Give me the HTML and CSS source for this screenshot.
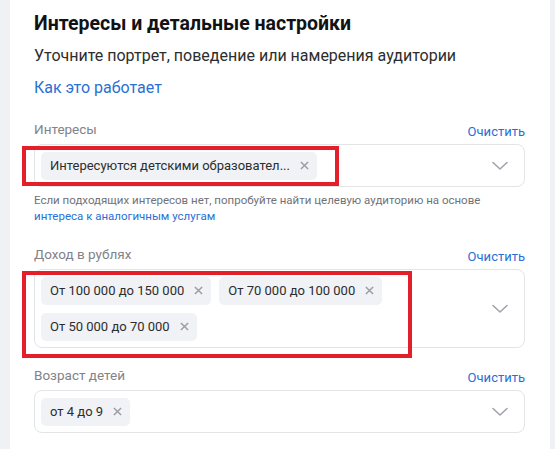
FILE: index.html
```html
<!DOCTYPE html>
<html lang="ru">
<head>
<meta charset="utf-8">
<link rel="stylesheet" href="styles.css">
</head>
<body>
<div class="card">
  <h2 class="title">Интересы и детальные настройки</h2>
  <p class="subtitle">Уточните портрет, поведение или намерения аудитории</p>
  <a class="how">Как это работает</a>

  <div class="field f1">
    <div class="label-row"><span class="label">Интересы</span><a class="clear">Очистить</a></div>
    <div class="box">
      <div class="chips">
        <span class="chip">Интересуются детскими образовател...<svg class="x" viewBox="0 0 10 10"><path d="M1 1L9 9M9 1L1 9"/></svg></span>
      </div>
      <svg class="chev" viewBox="0 0 16 10"><path d="M1 1.5L8 8L15 1.5"/></svg>
    </div>
    <p class="hint">Если подходящих интересов нет, попробуйте найти целевую аудиторию на основе<br><a class="hint-link">интереса к аналогичным услугам</a></p>
  </div>

  <div class="field f2">
    <div class="label-row"><span class="label">Доход в рублях</span><a class="clear">Очистить</a></div>
    <div class="box">
      <div class="chips">
        <span class="chip">От 100 000 до 150 000<svg class="x" viewBox="0 0 10 10"><path d="M1 1L9 9M9 1L1 9"/></svg></span>
        <span class="chip">От 70 000 до 100 000<svg class="x" viewBox="0 0 10 10"><path d="M1 1L9 9M9 1L1 9"/></svg></span>
        <span class="chip">От 50 000 до 70 000<svg class="x" viewBox="0 0 10 10"><path d="M1 1L9 9M9 1L1 9"/></svg></span>
      </div>
      <svg class="chev" viewBox="0 0 16 10"><path d="M1 1.5L8 8L15 1.5"/></svg>
    </div>
  </div>

  <div class="field f3">
    <div class="label-row"><span class="label">Возраст детей</span><a class="clear">Очистить</a></div>
    <div class="box">
      <div class="chips">
        <span class="chip">от 4 до 9<svg class="x" viewBox="0 0 10 10"><path d="M1 1L9 9M9 1L1 9"/></svg></span>
      </div>
      <svg class="chev" viewBox="0 0 16 10"><path d="M1 1.5L8 8L15 1.5"/></svg>
    </div>
  </div>
</div>
<div class="mark mark1"></div>
<div class="mark mark2"></div>
</body>
</html>
```

FILE: styles.css
```css
html, body {
  margin: 0;
  padding: 0;
}
body {
  background: #f0f1f5;
  font-family: Roboto, "Noto Sans", sans-serif;
  color: #2c2d2e;
  width: 555px;
  height: 449px;
  overflow: hidden;
  position: relative;
}
.card {
  background: #ffffff;
  margin: 0 5px 0 10px;
  padding: 11px 25px 20px 24px;
  height: 449px;
  box-sizing: border-box;
}
.title {
  margin: 0;
  font-size: 19.5px;
  line-height: 26px;
  font-weight: 700;
  color: #111213;
}
.subtitle {
  margin: 8px 0 0;
  font-size: 16px;
  line-height: 22px;
  color: #2c2d2e;
}
.how {
  display: block;
  margin-top: 10px;
  font-size: 16px;
  line-height: 22px;
  color: #2a6fd4;
}
.f1 { margin-top: 19px; }
.f2 { margin-top: 19px; }
.f3 { margin-top: 16px; }
.label-row {
  display: flex;
  justify-content: space-between;
  align-items: flex-end;
  height: 20px;
}
.label {
  font-size: 13.5px;
  line-height: 18px;
  color: #818389;
}
.clear {
  font-size: 13px;
  line-height: 18px;
  color: #2a6fd4;
  margin-bottom: -3px;
}
.box {
  margin-top: 6px;
  border: 1px solid #e2e4e8;
  border-radius: 8px;
  padding: 6.5px 16px 6.5px 6px;
  display: flex;
  align-items: center;
  gap: 12px;
}
.chips {
  flex: 1;
  display: flex;
  flex-wrap: wrap;
  gap: 8px;
}
.chip {
  display: inline-flex;
  align-items: center;
  gap: 10px;
  height: 28px;
  padding: 0 8px 0 9px;
  background: #f0f2f5;
  border-radius: 5px;
  font-size: 13px;
  color: #2c2d2e;
  white-space: nowrap;
}
.x {
  width: 9px;
  height: 9px;
  fill: none;
  stroke: #999ca3;
  stroke-width: 1.6;
}
.chev {
  width: 16px;
  height: 10px;
  fill: none;
  stroke: #a0a4ab;
  stroke-width: 1.6;
  stroke-linecap: round;
  stroke-linejoin: round;
}
.hint {
  margin: 5px 0 0;
  font-size: 11.5px;
  line-height: 16px;
  color: #6f7278;
}
.hint-link {
  color: #2a6fd4;
}
.mark {
  position: absolute;
  border: 4px solid #e3202a;
  box-sizing: border-box;
}
.mark1 {
  left: 22px;
  top: 146px;
  width: 317px;
  height: 40px;
}
.mark2 {
  left: 22px;
  top: 271px;
  width: 390px;
  height: 87px;
}
```
